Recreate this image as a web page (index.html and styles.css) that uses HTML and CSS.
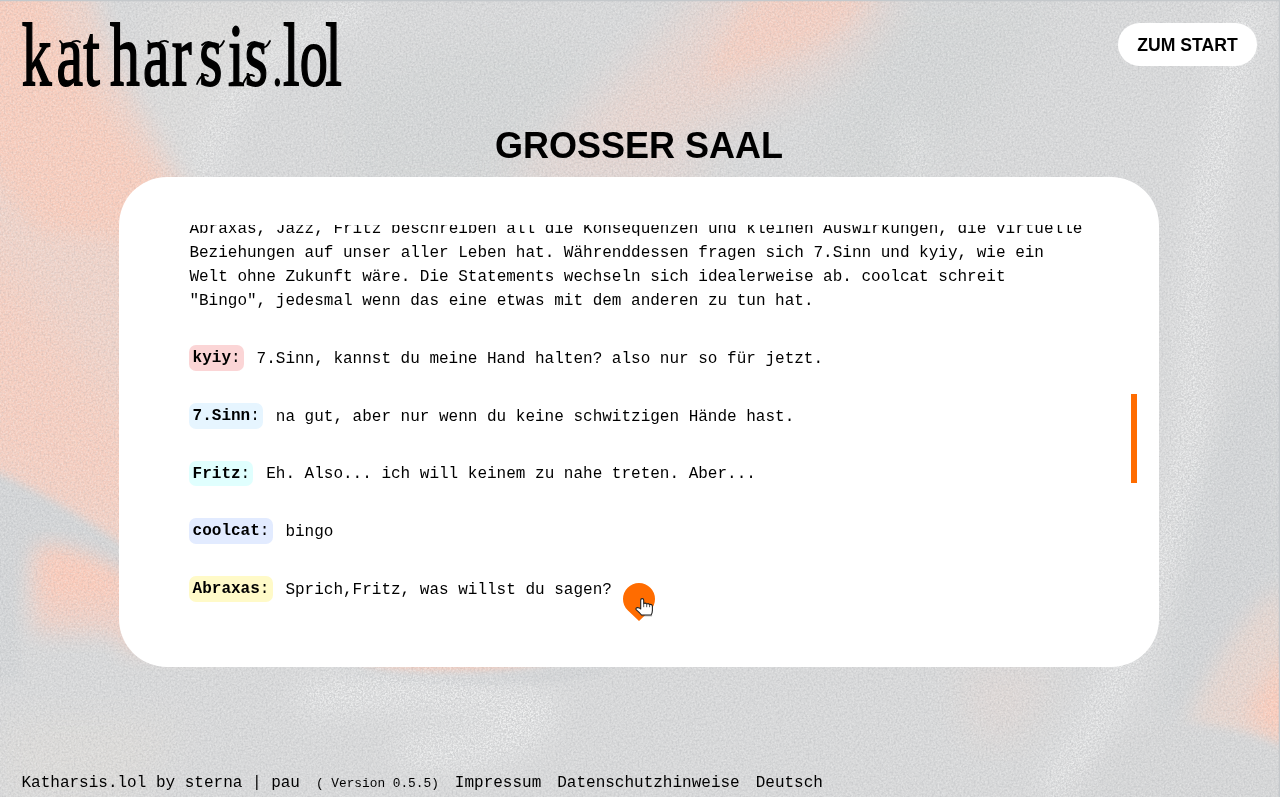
FILE: index.html
```html
<!DOCTYPE html>
<html lang="de">
<head>
<meta charset="utf-8">
<title>katharsis.lol</title>
<link rel="stylesheet" href="styles.css">
</head>
<body>
<svg class="backdrop" viewBox="0 0 1280 797" preserveAspectRatio="none" aria-hidden="true">
  <defs>
    <filter id="soft" x="-30%" y="-30%" width="160%" height="160%"><feGaussianBlur stdDeviation="22"/></filter>
    <filter id="edge" x="-30%" y="-30%" width="160%" height="160%"><feGaussianBlur stdDeviation="11"/></filter>
    <filter id="fine" x="-30%" y="-30%" width="160%" height="160%"><feGaussianBlur stdDeviation="4"/></filter>
    <filter id="grain" x="0" y="0" width="100%" height="100%" color-interpolation-filters="sRGB">
      <feTurbulence type="fractalNoise" baseFrequency="0.6" numOctaves="3" seed="4"/>
      <feColorMatrix type="matrix" values="0 0 0 0 1  0 0 0 0 1  0 0 0 0 1  1.8 0 0 0 -0.7"/>
    </filter>
    <filter id="shade" x="0" y="0" width="100%" height="100%" color-interpolation-filters="sRGB">
      <feTurbulence type="fractalNoise" baseFrequency="0.5" numOctaves="3" seed="9"/>
      <feColorMatrix type="matrix" values="0 0 0 0 .6  0 0 0 0 .61  0 0 0 0 .63  1.4 0 0 0 -0.6"/>
    </filter>
    <filter id="speckle" x="-20%" y="-20%" width="140%" height="140%" color-interpolation-filters="sRGB">
      <feGaussianBlur in="SourceGraphic" stdDeviation="15" result="b"/>
      <feTurbulence type="fractalNoise" baseFrequency="0.6" numOctaves="3" seed="2"/>
      <feColorMatrix type="matrix" values="0 0 0 0 1  0 0 0 0 1  0 0 0 0 1  4 0 0 0 -1.7" result="n"/>
      <feComposite in="n" in2="b" operator="in"/>
    </filter>
  </defs>
  <rect width="1280" height="797" fill="#d7d8d9"/>
  <path d="M170 0H330Q180 80 175 210L130 170Z" fill="#dcdbda" filter="url(#soft)"/>
  <path d="M350 90Q470 20 600 60L500 190H350Z" fill="#d3d5d6" filter="url(#soft)"/>
  <path d="M850 0H1060Q980 130 900 190H820Q850 100 850 0Z" fill="#d3d5d6" filter="url(#soft)"/>
  <path d="M-50-40H80Q110 60 145 120Q180 190 225 240V650H125Q100 580 0 480L-50 460Z" fill="#efd2c8" filter="url(#edge)"/>
  <path d="M-40-40H35Q75 80 135 150L210 240Q110 240 40 230Q0 180-40 130Z" fill="#f8ccbc" filter="url(#edge)"/>
  <path d="M-40 220Q60 340 150 440V540Q70 505 0 472L-40 455Z" fill="#f6cdbf" filter="url(#soft)"/>
  <path d="M-30 462Q60 495 150 565V602Q70 550 30 552Q12 570 22 680H-30Z" fill="#d2d4d6" filter="url(#fine)"/>
  <path d="M38 548Q85 550 150 590V632H35Q28 580 38 548Z" fill="#f1cfc4" filter="url(#edge)"/>
  <path d="M40 548Q85 550 140 590L110 600H45Z" fill="#fbcab9" filter="url(#edge)"/>
  <path d="M720-20H900Q870 60 790 90Q690 140 650 160H540Q620 90 720-20Z" fill="#e8d4ce" filter="url(#soft)"/>
  <path d="M765-20H880Q850 40 780 58Q735 70 700 90Q715 40 765-20Z" fill="#f7ccbd" filter="url(#edge)" opacity=".8"/>
  <path d="M520 160H700V190H520Z" fill="#ecd2ca" filter="url(#soft)" opacity=".7"/>
  <path d="M1180 520Q1210 420 1285 320V620L1160 735Z" fill="#d2d4d6" filter="url(#edge)"/>
  <path d="M1285 585Q1230 625 1190 725L1285 755Z" fill="#e7d5ce" filter="url(#edge)"/>
  <path d="M1300 630Q1268 680 1245 715L1300 755Z" fill="#fbcbba" filter="url(#edge)"/>
  <path d="M1285 748Q1200 710 1130 735Q1080 760 1050 810H1285Z" fill="#d5d6d7" filter="url(#fine)"/>
  <path d="M360 650H590Q540 670 460 672Q400 674 360 663Z" fill="#f2c9bb" filter="url(#fine)"/>
  <path d="M330 668Q450 682 620 665Q570 688 460 685Q370 682 330 668Z" fill="#d0d2d4" filter="url(#fine)"/>
  <path d="M960 670H1060L1010 740H980Z" fill="#dfd7d4" filter="url(#soft)"/>
  <path d="M0 720H190L130 797H0Z" fill="#dcdad8" filter="url(#soft)"/>
  <g filter="url(#speckle)" fill="none" stroke="#fff" opacity=".7">
    <path d="M370 5Q210 60 205 190" stroke-width="22"/>
    <path d="M905 120Q915 150 920 180" stroke-width="18"/>
    <path d="M1250 0Q1190 230 1195 380Q1185 590 1050 797" stroke-width="28"/>
    <path d="M300 700Q420 680 540 710Q520 760 400 750" stroke-width="34"/>
  </g>
  <rect width="1280" height="797" filter="url(#grain)" opacity=".4"/>
  <rect width="1280" height="797" filter="url(#shade)" opacity=".45"/>
  <path d="M0 .5H1280M1279.5 0V797" fill="none" stroke="#c4c8cb" stroke-width="1.5"/>
</svg>

<div class="page">
  <header class="header">
    <svg class="logo" width="322" height="66" viewBox="0 0 322 66" role="img" aria-label="katharsis.lol">
      <text class="logo-text" transform="scale(.67 1)" y="61.8" x="1 53 93 133 182 225 266 309 334 376 391 416 454">katharsis<tspan class="logo-dot">.</tspan>l<tspan class="logo-o">o</tspan>l</text>
      <g class="swash">
        <path d="M39 18Q44 26 49 21T59 19"/>
        <path d="M127 18Q132 26 137 21T147 19"/>
        <path d="M181 22Q188 16 193 22T203 18"/>
        <path d="M227 22Q234 16 239 22T249 18"/>
        <path d="M176 61Q181 49 187 53M222 61Q227 49 233 53"/>
      </g>
    </svg>
    <a class="start">ZUM START</a>
  </header>

  <main class="main">
    <h1 class="title">GROSSER SAAL</h1>
    <section class="card">
      <div class="chat">
        <p class="intro">Abraxas, Jazz, Fritz beschreiben all die Konsequenzen und kleinen Auswirkungen, die virtuelle<br>Beziehungen auf unser aller Leben hat. Währenddessen fragen sich 7.Sinn und kyiy, wie ein<br>Welt ohne Zukunft wäre. Die Statements wechseln sich idealerweise ab. coolcat schreit<br>"Bingo", jedesmal wenn das eine etwas mit dem anderen zu tun hat.</p>
        <p class="message"><span class="tag pink"><b>kyiy</b>:</span> 7.Sinn, kannst du meine Hand halten? also nur so für jetzt.</p>
        <p class="message"><span class="tag blue"><b>7.Sinn</b>:</span> na gut, aber nur wenn du keine schwitzigen Hände hast.</p>
        <p class="message"><span class="tag mint"><b>Fritz</b>:</span> Eh. Also... ich will keinem zu nahe treten. Aber...</p>
        <p class="message"><span class="tag violet"><b>coolcat</b>:</span> bingo</p>
        <p class="message"><span class="tag yellow"><b>Abraxas</b>:</span> Sprich,Fritz, was willst du sagen?</p>
      </div>
      <div class="scroll-thumb"></div>
      <svg class="next" width="34" height="40" viewBox="0 0 34 40" aria-hidden="true">
        <path d="M4.7 27.3A16 16 0 1 1 27.3 27.3L16 38Z" fill="#ff6c00"/>
        <path d="M17.8 31.8H29.2L29 33.6H19Z" fill="#555" opacity=".35"/>
        <path d="M17.7 26V17.3Q17.7 15.6 19.2 15.6T20.7 17.3V20.6Q22.5 19.5 23.7 21Q25.4 20 26.6 21.5Q29.4 21 29.4 23.6V27.5Q29.4 29.8 28.1 32H18.5Q16 29.2 13.1 26.7Q12.5 25 14.2 24.6Q16.3 24.4 17.7 26Z" fill="#fff" stroke="#222" stroke-width="1.1" stroke-linejoin="round"/>
        <path d="M20.7 20.8V24.2M23.7 21.2V24.2M26.6 21.7V24.2" stroke="#222" stroke-width=".8"/>
      </svg>
    </section>
  </main>

  <footer class="footer">
    <span>Katharsis.lol by sterna | pau</span>
    <span class="version">( Version 0.5.5)</span>
    <a>Impressum</a>
    <a>Datenschutzhinweise</a>
    <a>Deutsch</a>
  </footer>
</div>
</body>
</html>
```
FILE: styles.css
```css
* { box-sizing: border-box; }
body {
  margin: 0;
  overflow: hidden;
  color: #000;
  font: 16px/24px "Liberation Mono", monospace;
}
.backdrop {
  position: fixed;
  inset: 0;
  width: 100%;
  height: 100%;
  z-index: -1;
}
.page {
  display: flex;
  flex-direction: column;
  height: 797px;
}
.header {
  display: flex;
  justify-content: space-between;
  align-items: flex-start;
  height: 121px;
  padding: 23px 23px 0 21px;
}
.logo { display: block; overflow: visible; }
.logo-text {
  font: 89px "Liberation Serif", serif;
  stroke: #000;
  stroke-width: 1.8px;
}
.logo-dot { font-size: 52px; }
.logo-o { font-size: 84px; }
.swash {
  fill: none;
  stroke: #000;
  stroke-width: 1.8px;
  stroke-linecap: round;
}
.start {
  display: flex;
  align-items: center;
  justify-content: center;
  width: 139px;
  height: 43px;
  padding-top: 2px;
  border-radius: 22px;
  background: #fff;
  font: bold 17.6px "Liberation Sans", sans-serif;
}
.main {
  width: 1040px;
  margin-left: 119px;
}
.title {
  margin: 0;
  height: 56px;
  font: bold 36px/50px "Liberation Sans", sans-serif;
  text-align: center;
}
.card {
  position: relative;
  display: flex;
  justify-content: space-between;
  align-items: center;
  height: 490px;
  padding: 48px 22px 48px 70.4px;
  border-radius: 48px;
  background: #fff;
}
.chat {
  width: 910px;
  height: 100%;
  overflow: hidden;
}
.intro { margin: -8px 0 0; padding-bottom: .2px; white-space: nowrap; }
.message { margin: 33.7px 0 0; white-space: nowrap; }
.tag {
  margin-right: 3.2px;
  padding: 4.4px 3.2px 3.3px;
  border-radius: 7px;
  line-height: 20px;
  vertical-align: .33px;
}
.pink { background: #fbd5d6; }
.blue { background: #e6f5ff; }
.mint { background: #e0fffe; }
.violet { background: #e2ebff; }
.yellow { background: #fffac8; }
.scroll-thumb {
  width: 6px;
  height: 89px;
  margin-top: 33px;
  background: #ff6c00;
}
.next {
  position: absolute;
  left: 504px;
  top: 406px;
  overflow: visible;
}
.footer {
  display: flex;
  align-items: baseline;
  gap: 16px;
  margin-top: auto;
  padding: 0 21.5px 1px;
}
.version { font-size: 12.8px; }
```
